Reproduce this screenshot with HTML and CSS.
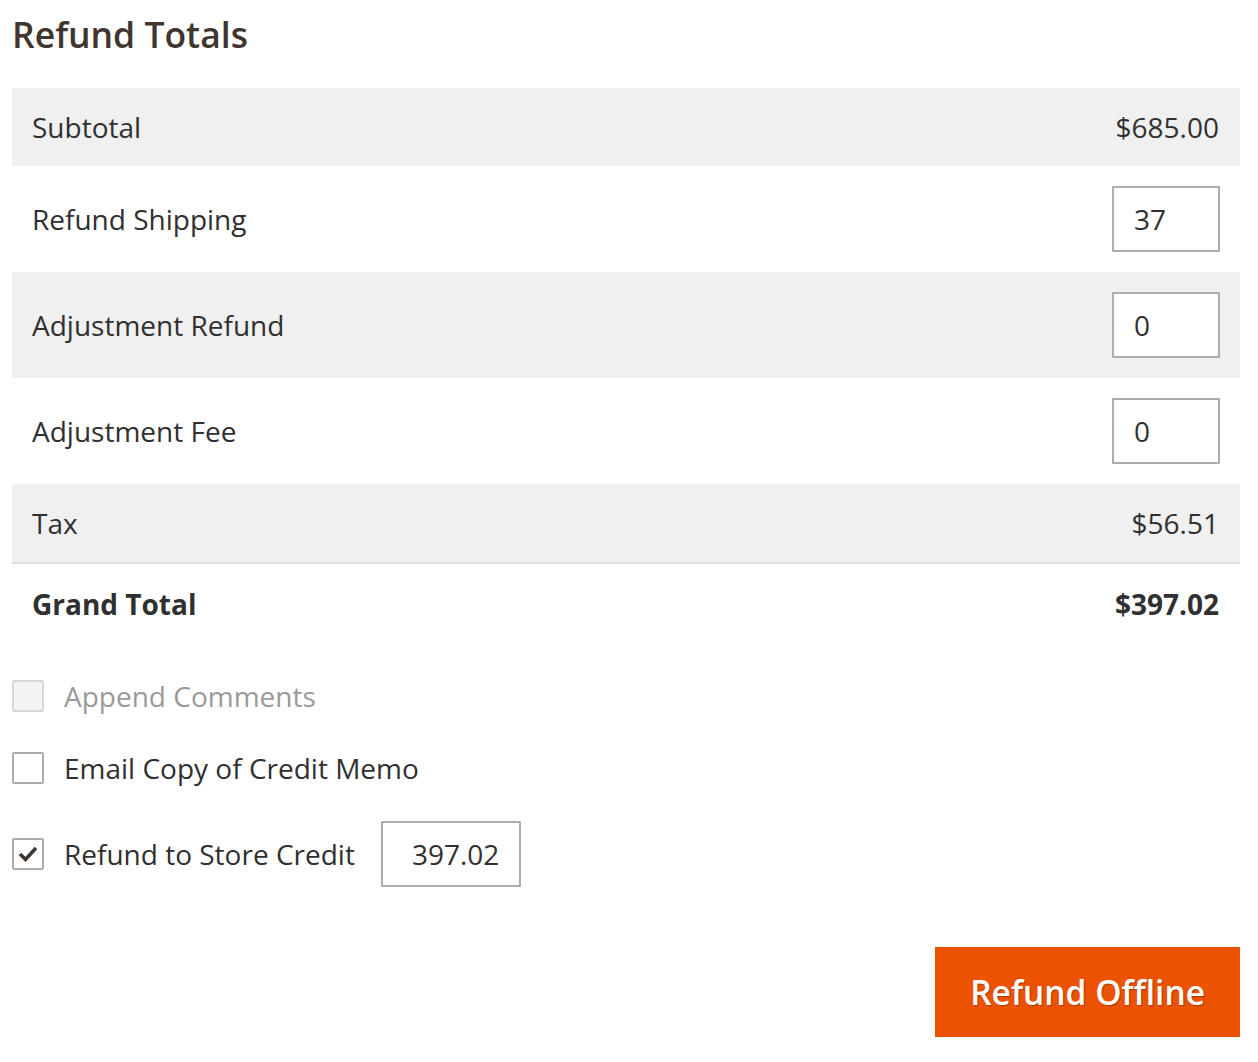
FILE: index.html
```html
<!DOCTYPE html>
<html>

<head>
    <meta name="viewport" content="width=device-width, initial-scale=1.0">
    <title>Refund Totals</title>
    <link rel="stylesheet" href="styles.css">
</head>

<body>
    <h1 class="title">Refund Totals</h1>

    <table class="totals">
        <tbody>
            <tr class="grey">
                <td>Subtotal</td>
                <td class="amount">$685.00</td>
            </tr>
            <tr>
                <td>Refund Shipping</td>
                <td class="amount"><input type="text" class="field" value="37"></td>
            </tr>
            <tr class="grey">
                <td>Adjustment Refund</td>
                <td class="amount"><input type="text" class="field" value="0"></td>
            </tr>
            <tr>
                <td>Adjustment Fee</td>
                <td class="amount"><input type="text" class="field" value="0"></td>
            </tr>
            <tr class="grey tax">
                <td>Tax</td>
                <td class="amount">$56.51</td>
            </tr>
            <tr class="grand">
                <td>Grand Total</td>
                <td class="amount">$397.02</td>
            </tr>
        </tbody>
    </table>

    <div class="options">
        <label class="option disabled">
            <span class="box"></span>
            <span>Append Comments</span>
        </label>
        <label class="option">
            <span class="box"></span>
            <span>Email Copy of Credit Memo</span>
        </label>
        <label class="option">
            <span class="box">
                <svg width="22" height="22" viewBox="0 0 22 22">
                    <polyline points="3,11 8.5,16.5 19,5" fill="none" stroke="#41362f" stroke-width="3.6" />
                </svg>
            </span>
            <span>Refund to Store Credit</span>
            <input type="text" class="field credit" value="397.02">
        </label>
    </div>

    <div class="actions">
        <button type="button" class="primary">Refund Offline</button>
    </div>
</body>

</html>
```

FILE: styles.css
```css
* {
    box-sizing: border-box;
    font-family: "Open Sans", Arial, sans-serif;
}

body {
    margin: 0;
    padding: 12px 18px 0 12px;
    color: #303030;
    background: #fff;
}

.title {
    margin: 0 0 32px;
    font-size: 35.5px;
    line-height: 44px;
    font-weight: 600;
    color: #41362f;
}

.totals {
    width: 100%;
    border-collapse: collapse;
    font-size: 28px;
    line-height: 38px;
}

.totals td {
    padding: 20px 20px;
    vertical-align: middle;
}

.totals .amount {
    text-align: right;
    padding-right: 21px;
}

.grey {
    background-color: #f0f0f0;
}

.tax td {
    border-bottom: 2px solid #dedede;
}

.grand td {
    font-weight: 700;
    padding-top: 21px;
}

.totals .field {
    margin-right: -1px;
}

.field {
    width: 108px;
    height: 66px;
    padding: 0 20px;
    border: 2px solid #adadad;
    border-radius: 1px;
    font-size: 28px;
    color: #303030;
    background: #fff;
    vertical-align: middle;
}

.options {
    margin-top: 34px;
    display: flex;
    flex-direction: column;
    gap: 34px;
    font-size: 28px;
    line-height: 38px;
}

.option {
    display: flex;
    align-items: center;
    gap: 20px;
}

.box {
    width: 32px;
    height: 32px;
    border: 2px solid #adadad;
    border-radius: 2px;
    background: #fff;
    display: flex;
    align-items: center;
    justify-content: center;
}

.disabled {
    color: #9a9a9a;
}

.disabled .box {
    background: #f3f3f3;
    border-color: #d6d6d6;
}

.credit {
    width: 140px;
    margin-left: 6px;
    padding-left: 29px;
}

.actions {
    margin-top: 60px;
    display: flex;
    justify-content: flex-end;
}

.primary {
    height: 90px;
    padding: 0 35px;
    border: none;
    border-radius: 0;
    background-color: #eb5202;
    color: #fff;
    font-size: 33.5px;
    font-weight: 600;
    text-shadow: 1px 1px 1px rgba(0, 0, 0, 0.3);
    cursor: pointer;
}
```
